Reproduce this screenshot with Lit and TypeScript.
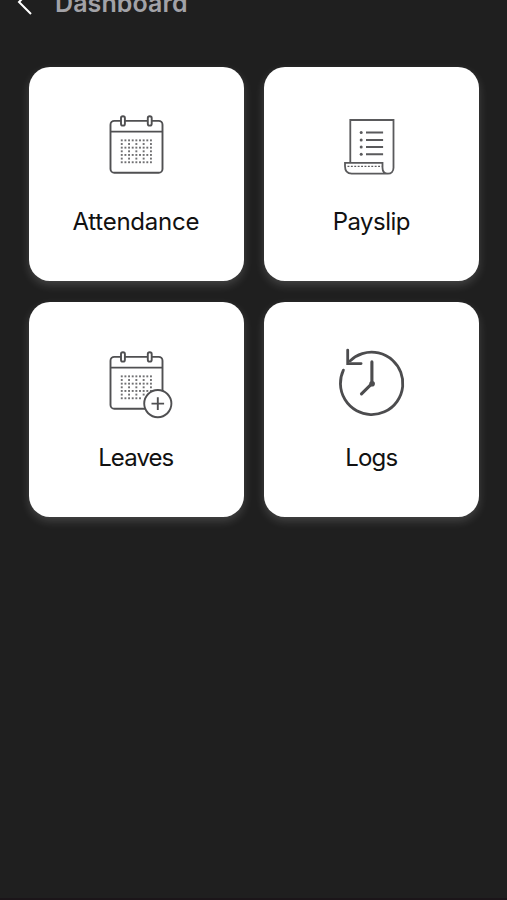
import { LitElement, html, svg, css } from "lit";
import { customElement, property } from "lit/decorators.js";
import { styleMap } from "lit/directives/style-map.js";

const range = (n: number) => Array.from({ length: n }, (_, i) => i);

// Day cells have dotted outlines: full dotted rows alternate with rows
// that only carry the cell borders.
const dayDots = (withBadge: boolean) =>
  range(7).map((r) =>
    range(9)
      .filter((c) => r % 2 === 0 || c % 2 === 0)
      .filter((c) => !(withBadge && ((r === 6 && c > 5) || (r === 5 && c > 6))))
      .map((c) => svg`<rect x=${24.8 + c * 3.65} y=${34.4 + r * 3.65} width="1.9" height="1.9"/>`)
  );

const calendar = (withBadge: boolean) => svg`
  <g fill="none" stroke="#505052" stroke-width="1.9">
    <rect x="14.5" y="15.9" width="52" height="51.9" rx="3.8"/>
    <path d="M14.5 26.6H66.5"/>
    <rect class="paper" x="25" y="11.2" width="3.9" height="9.4" rx="1.9"/>
    <rect class="paper" x="51.8" y="11.2" width="3.9" height="9.4" rx="1.9"/>
  </g>
  <g fill="#707072">${dayDots(withBadge)}</g>
  ${withBadge
    ? svg`<g class="paper" stroke="#505052" stroke-width="1.9">
        <circle cx="61.8" cy="62.6" r="13.6"/>
        <path d="M61.8 56.3V68.9M55.5 62.6H68.1"/>
      </g>`
    : null}
`;

const icons: Record<string, unknown> = {
  attendance: calendar(false),
  leaves: calendar(true),
  payslip: svg`
    <g transform="translate(.7 0)">
      <g fill="none" stroke="#5a5a5c" stroke-width="1.8">
        <path d="M18.6 57.8V15H61.8V62.8C61.8 66.3 59.5 68.7 56.3 68.7C53 68.7 50.8 66.4 50.8 62.8V57.8H13.3V61C13.3 66 15.5 68.7 20 68.7H56.3"/>
        <path stroke-width="2" d="M34.3 27.6H51.4M34.3 34.9H51.4M34.3 42H51.4M34.3 49.2H51.4"/>
        <path stroke-width="1.3" stroke-dasharray="1.9 1.5" d="M15.8 61.4H50"/>
      </g>
      <g fill="#5a5a5c">
        ${[27.6, 34.9, 42, 49.2].map((y) => svg`<circle cx="29.5" cy=${y} r="1.5"/>`)}
      </g>
    </g>`,
  logs: svg`
    <g transform="translate(.5 0)">
      <g fill="none" stroke="#4c4c4e" stroke-width="2.8" stroke-linecap="round" stroke-linejoin="round">
        <path d="M11.9 29.1A31.2 31.2 0 1 0 18.5 19.9"/>
        <path stroke-linejoin="miter" d="M16.2 9.1V22.6H29.6"/>
        <path stroke-width="3.1" d="M40.4 20.9V42.7L30 52.9"/>
      </g>
      <circle cx="40.6" cy="42.7" r="2.8" fill="#4c4c4e"/>
    </g>`,
};

@customElement("menu-card")
class MenuCard extends LitElement {
  @property() icon = "";
  @property() label = "";
  @property({ type: Number }) tracking = 0;

  static styles = css`
    :host {
      display: flex;
      flex-direction: column;
      align-items: center;
      box-sizing: border-box;
      height: 214.3px;
      padding: 38.2px 1px 0 0;
      border-radius: 21px;
      background: #fff;
      box-shadow: 0 4px 10px rgba(255, 255, 255, 0.17);
    }
    .icon {
      display: block;
      width: 80px;
      height: 80px;
      overflow: visible;
    }
    .paper {
      fill: #fff;
    }
    .label {
      margin-top: 22px;
      font-size: 24px;
      line-height: 30px;
      color: #111;
      white-space: nowrap;
    }
  `;

  render() {
    return html`
      <svg class="icon" viewBox="0 0 80 80">${icons[this.icon]}</svg>
      <span class="label" style=${styleMap({ letterSpacing: `${this.tracking}px` })}>${this.label}</span>
    `;
  }
}

@customElement("app-root")
class AppRoot extends LitElement {
  static styles = css`
    :host {
      display: block;
      box-sizing: border-box;
      height: 900px;
      overflow: hidden;
      background: #1f1f1f;
      border-bottom: 2px solid #1b1519;
      font-family: Inter, "Liberation Sans", sans-serif;
    }
    .bar {
      display: flex;
      align-items: flex-start;
      height: 67.2px;
      padding-left: 16px;
      box-sizing: border-box;
    }
    .back {
      flex: none;
      width: 20px;
      height: 20px;
    }
    .title {
      margin: -12px 0 0 19px;
      font-size: 25px;
      line-height: 30px;
      font-weight: 600;
      letter-spacing: 0.1px;
      color: #a2a2a7;
    }
    .grid {
      display: grid;
      grid-template-columns: 214.6px 214.6px;
      gap: 20.9px;
      padding-left: 29px;
    }
  `;

  render() {
    return html`
      <header class="bar">
        <svg class="back" viewBox="0 0 20 20" fill="none" stroke="#fff" stroke-width="2">
          <path d="M15 -10L3 2L15 14" />
        </svg>
        <h1 class="title">Dashboard</h1>
      </header>
      <main class="grid">
        <menu-card icon="attendance" label="Attendance" tracking="-0.25"></menu-card>
        <menu-card icon="payslip" label="Payslip" tracking="-0.55"></menu-card>
        <menu-card icon="leaves" label="Leaves" tracking="-0.9"></menu-card>
        <menu-card icon="logs" label="Logs" tracking="-0.8"></menu-card>
      </main>
    `;
  }
}
